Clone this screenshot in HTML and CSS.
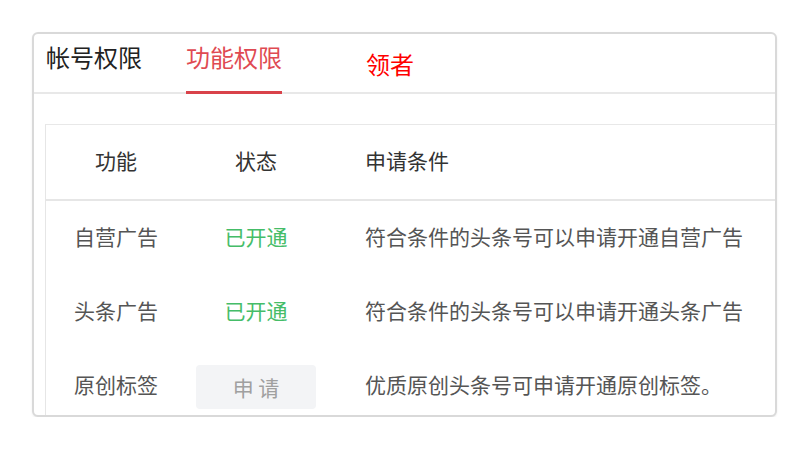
FILE: index.html
```html
<!DOCTYPE html>
<html lang="zh-CN">
<head>
<meta charset="utf-8">
<link rel="stylesheet" href="styles.css">
</head>
<body>
<div class="card">
  <div class="tabs">
    <div class="tab">帐号权限</div>
    <div class="tab active">功能权限</div>
    <div class="note">领者</div>
  </div>
  <div class="table">
    <div class="row head">
      <div class="c1">功能</div>
      <div class="c2">状态</div>
      <div class="c3">申请条件</div>
    </div>
    <div class="row">
      <div class="c1">自营广告</div>
      <div class="c2 on">已开通</div>
      <div class="c3">符合条件的头条号可以申请开通自营广告</div>
    </div>
    <div class="row">
      <div class="c1">头条广告</div>
      <div class="c2 on">已开通</div>
      <div class="c3">符合条件的头条号可以申请开通头条广告</div>
    </div>
    <div class="row">
      <div class="c1">原创标签</div>
      <div class="c2"><span class="btn">申 请</span></div>
      <div class="c3">优质原创头条号可申请开通原创标签。</div>
    </div>
  </div>
</div>
</body>
</html>
```
FILE: styles.css
```css
html, body {
  margin: 0;
  padding: 0;
  background: #fff;
}
body {
  font-family: "Noto Sans CJK SC", "Noto Sans", sans-serif;
  padding: 32px 0 0 32px;
}
.card {
  width: 741px;
  height: 381px;
  border: 2px solid #d9d9d9;
  border-radius: 6px;
  box-shadow: 0 1px 2px rgba(0,0,0,0.08);
  overflow: hidden;
  background: #fff;
}
.tabs {
  display: flex;
  align-items: flex-start;
  height: 58px;
  padding-left: 12px;
  border-bottom: 2px solid #e8e8e8;
}
.tab {
  font-size: 24px;
  line-height: 46px;
  height: 57px;
  color: #222;
  margin-right: 44px;
}
.tab.active {
  color: #df4a52;
  border-bottom: 3px solid #d9424a;
}
.note {
  margin-left: 40px;
  padding-top: 13px;
  font-size: 24px;
  line-height: 34px;
  color: #f00;
}
.table {
  margin: 30px 0 0 11px;
  border-left: 1px solid #e6e6e6;
  border-top: 1px solid #e8e8e8;
  width: 760px;
}
.row {
  display: grid;
  grid-template-columns: 140px 140px 1fr;
  align-items: center;
  height: 74px;
  font-size: 21px;
  line-height: 26px;
  padding-bottom: 4px;
  box-sizing: border-box;
  color: #555;
}
.row.head {
  height: 76px;
  color: #333;
  border-bottom: 2px solid #e6e6e6;
}
.c1, .c2 {
  text-align: center;
}
.c3 {
  padding-left: 39px;
  white-space: nowrap;
}
.c2.on {
  color: #45bd68;
}
.btn {
  display: inline-block;
  width: 120px;
  height: 44px;
  line-height: 44px;
  margin-top: 5px;
  background: #f3f4f6;
  border-radius: 4px;
  color: #a0a0a0;
}
```
